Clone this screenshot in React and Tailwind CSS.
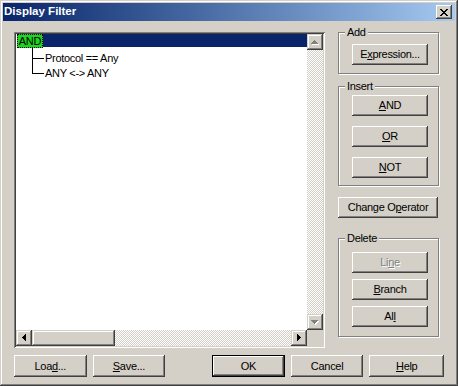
const F = "font-['Liberation_Sans',Arial,sans-serif]";
const BTN =
  "shadow-[inset_-1px_-1px_#404040,inset_1px_1px_#ffffff,inset_-2px_-2px_#808080,inset_2px_2px_#d4d0c8]";
const SBTN =
  "shadow-[inset_-1px_-1px_#404040,inset_1px_1px_#d4d0c8,inset_-2px_-2px_#808080,inset_2px_2px_#ffffff]";
const DITHER =
  "bg-[repeating-conic-gradient(#ffffff_0%_25%,#d4d0c8_0%_50%)] bg-[length:2px_2px]";

function Btn({ children, className = "", def = false, disabled = false }) {
  return (
    <div
      className={`flex items-center justify-center bg-[#d4d0c8] text-[11px] tracking-[-0.3px] leading-none ${
        def ? "border border-black" : ""
      } ${BTN} ${
        disabled ? "text-[#808080] [text-shadow:1px_1px_0_#ffffff]" : "text-black"
      } ${className}`}
    >
      <span>{children}</span>
    </div>
  );
}

function Arrow({ dir, disabled }) {
  const paths = {
    up: "M3 0h1v1h1v1h1v1h1v1H0V3h1V2h1V1h1z",
    down: "M0 0h7v1h-1v1h-1v1h-1v1h-1v-1h-1v-1h-1v-1h-1z",
    left: "M3 0h1v7h-1v-1h-1v-1h-1v-1h-1v-1h1v-1h1v-1h1z",
    right: "M0 0h1v1h1v1h1v1h1v1h-1v1h-1v1h-1v1h-1z",
  };
  const horiz = dir === "left" || dir === "right";
  const w = horiz ? 5 : 8;
  const h = horiz ? 8 : 5;
  return (
    <svg width={w} height={h} viewBox={`0 0 ${w} ${h}`} shapeRendering="crispEdges">
      {disabled && <path d={paths[dir]} transform="translate(1 1)" fill="#ffffff" />}
      <path d={paths[dir]} fill={disabled ? "#808080" : "#000000"} />
    </svg>
  );
}

function SBtn({ dir, disabled, className = "" }) {
  return (
    <div
      className={`w-[16px] h-[16px] shrink-0 flex items-center justify-center bg-[#d4d0c8] ${SBTN} ${className}`}
    >
      <Arrow dir={dir} disabled={disabled} />
    </div>
  );
}

function Group({ label, className = "", children }) {
  return (
    <fieldset
      className={`w-[101px] border border-[#808080] px-0 shadow-[inset_1px_1px_#ffffff,1px_1px_#ffffff] ${className}`}
    >
      <legend className="ml-[6px] px-[2px] text-[11px] tracking-[-0.3px] leading-[12px] text-black bg-[#d4d0c8]">
        {label}
      </legend>
      {children}
    </fieldset>
  );
}

export default function App() {
  return (
    <div
      className={`w-[458px] h-[386px] bg-[#d4d0c8] p-[3px] flex flex-col ${F} shadow-[inset_-1px_-1px_#404040,inset_1px_1px_#d4d0c8,inset_-2px_-2px_#808080,inset_2px_2px_#ffffff]`}
    >
      {/* Title bar */}
      <div className="h-[18px] shrink-0 flex items-center bg-linear-to-r from-[#0a246a] to-[#a6caf0] pl-[1px] pr-[3px]">
        <span className="text-white font-bold text-[11.5px] leading-none">Display Filter</span>
        <div className={`ml-auto w-[16px] h-[14px] flex items-center justify-center bg-[#d4d0c8] ${BTN}`}>
          <svg width="8" height="7" viewBox="0 0 8 7" shapeRendering="crispEdges">
            <path
              fill="#000"
              d="M0 0h2v1H0zM6 0h2v1H6zM1 1h2v1H1zM5 1h2v1H5zM2 2h4v1H2zM3 3h2v1H3zM2 4h4v1H2zM1 5h2v1H1zM5 5h2v1H5zM0 6h2v1H0zM6 6h2v1H6z"
            />
          </svg>
        </div>
      </div>

      {/* Body */}
      <div className="flex-1 flex flex-col px-[11px]">
        <div className="flex items-start mt-[5px]">
          {/* Tree box */}
          <div className="mt-[6px] w-[311px] h-[316px] shrink-0 bg-white p-[2px] flex flex-col shadow-[inset_1px_1px_#808080,inset_-1px_-1px_#ffffff,inset_2px_2px_#404040,inset_-2px_-2px_#d4d0c8]">
            <div className="flex flex-1 min-h-0">
              <div className="flex-1 flex flex-col text-[11px] tracking-[-0.3px] text-black">
                <div className="flex h-[14px]">
                  <div className="ml-[1px] w-[26px] h-[14px] bg-[#1ed41e] border border-dotted border-black flex items-center justify-center leading-none">
                    AND
                  </div>
                  <div className="flex-1 h-[13px] bg-[#0a246a]" />
                </div>
                <div className="flex ml-[16px]">
                  <svg width="13" height="27" viewBox="0 0 13 27" shapeRendering="crispEdges" className="shrink-0">
                    <path d="M0.5 0V26M0 10.5H12M0 25.5H12" stroke="#000" strokeWidth="1" fill="none" />
                  </svg>
                  <div className="pt-[3px] leading-[15px] whitespace-nowrap">
                    <div>Protocol == Any</div>
                    <div>ANY &lt;-&gt; ANY</div>
                  </div>
                </div>
              </div>
              <div className="w-[16px] flex flex-col">
                <SBtn dir="up" disabled />
                <div className={`flex-1 ${DITHER}`} />
                <SBtn dir="down" disabled />
              </div>
            </div>
            <div className="flex h-[16px] shrink-0">
              <SBtn dir="left" />
              <div className={`w-[83px] h-[16px] bg-[#d4d0c8] ${SBTN}`} />
              <div className={`flex-1 ${DITHER}`} />
              <SBtn dir="right" />
              <div className="w-[16px] h-[16px] bg-[#d4d0c8]" />
            </div>
          </div>

          {/* Right column */}
          <div className="ml-[13px] flex flex-col">
            <Group label="Add" className="pt-[6px] pb-[8px]">
              <Btn className="ml-[13px] w-[76px] h-[21px]">
                E<u>x</u>pression...
              </Btn>
            </Group>
            <Group label="Insert" className="mt-[6px] pt-[3px] pb-[7px]">
              <div className="flex flex-col gap-[10px]">
                <Btn className="ml-[13px] w-[76px] h-[21px]">
                  <u>A</u>ND
                </Btn>
                <Btn className="ml-[13px] w-[76px] h-[21px]">
                  <u>O</u>R
                </Btn>
                <Btn className="ml-[13px] w-[76px] h-[21px]">
                  <u>N</u>OT
                </Btn>
              </div>
            </Group>
            <Btn className="mt-[11px] w-[100px] h-[21px]">
              Change O<u>p</u>erator
            </Btn>
            <Group label="Delete" className="mt-[14px] pt-[8px] pb-[9px]">
              <div className="flex flex-col gap-[6px]">
                <Btn className="ml-[13px] w-[76px] h-[21px]" disabled>
                  Li<u>n</u>e
                </Btn>
                <Btn className="ml-[13px] w-[76px] h-[21px]">
                  <u>B</u>ranch
                </Btn>
                <Btn className="ml-[13px] w-[76px] h-[21px]">
                  Al<u>l</u>
                </Btn>
              </div>
            </Group>
          </div>
        </div>

        {/* Bottom buttons */}
        <div className="flex mt-[7px]">
          <Btn className="w-[73px] h-[22px]">
            Loa<u>d</u>...
          </Btn>
          <Btn className="ml-[6px] w-[73px] h-[22px]">
            <u>S</u>ave...
          </Btn>
          <Btn def className="ml-[47px] w-[73px] h-[22px]">
            OK
          </Btn>
          <Btn className="ml-[6px] w-[73px] h-[22px]">Cancel</Btn>
          <Btn className="ml-[6px] w-[75px] h-[22px]">
            <u>H</u>elp
          </Btn>
        </div>
      </div>
    </div>
  );
}
